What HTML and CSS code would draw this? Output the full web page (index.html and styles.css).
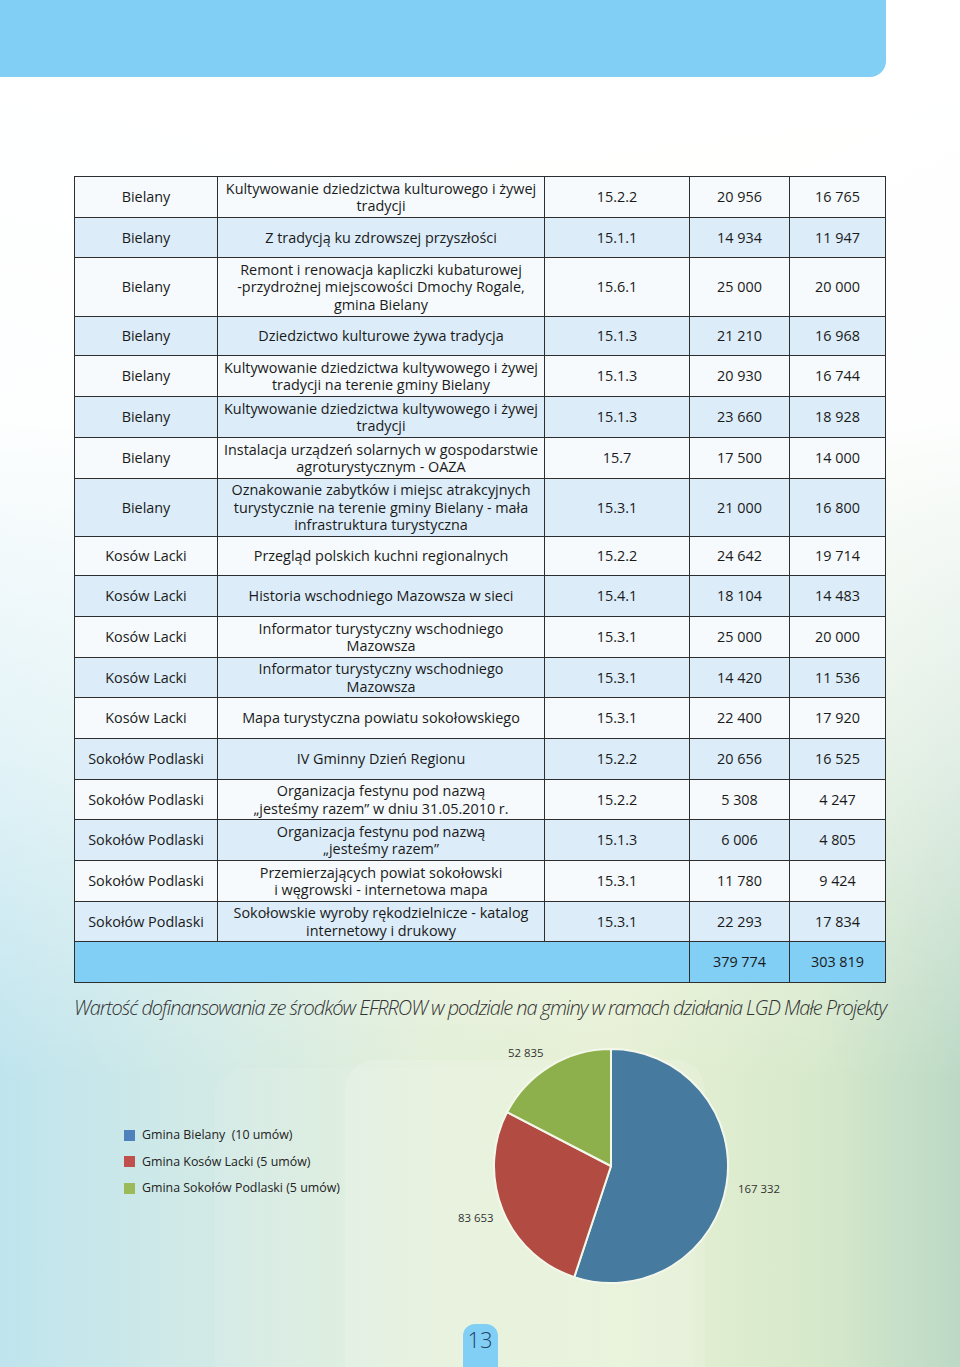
FILE: index.html
```html
<!DOCTYPE html>
<html lang="pl">
<head>
<meta charset="utf-8">
<title>Małe Projekty</title>
<link rel="stylesheet" href="styles.css">
</head>
<body>
<div class="page">
  <div class="deco deco-a"></div>
  <div class="deco deco-b"></div>
  <header class="banner"></header>
  <main class="content">
    <table class="grid">
      <colgroup>
        <col class="c1"><col class="c2"><col class="c3"><col class="c4"><col class="c5">
      </colgroup>
      <tbody>
        <tr class="h41"><td>Bielany</td><td>Kultywowanie dziedzictwa kulturowego i żywej<br>tradycji</td><td>15.2.2</td><td>20 956</td><td>16 765</td></tr>
        <tr class="h40"><td>Bielany</td><td>Z tradycją ku zdrowszej przyszłości</td><td>15.1.1</td><td>14 934</td><td>11 947</td></tr>
        <tr class="h59"><td>Bielany</td><td>Remont i renowacja kapliczki kubaturowej<br>-przydrożnej miejscowości Dmochy Rogale,<br>gmina Bielany</td><td>15.6.1</td><td>25 000</td><td>20 000</td></tr>
        <tr class="h39"><td>Bielany</td><td>Dziedzictwo kulturowe żywa tradycja</td><td>15.1.3</td><td>21 210</td><td>16 968</td></tr>
        <tr class="h41"><td>Bielany</td><td>Kultywowanie dziedzictwa kultywowego i żywej<br>tradycji na terenie gminy Bielany</td><td>15.1.3</td><td>20 930</td><td>16 744</td></tr>
        <tr class="h41"><td>Bielany</td><td>Kultywowanie dziedzictwa kultywowego i żywej<br>tradycji</td><td>15.1.3</td><td>23 660</td><td>18 928</td></tr>
        <tr class="h41"><td>Bielany</td><td>Instalacja urządzeń solarnych w gospodarstwie<br>agroturystycznym - OAZA</td><td>15.7</td><td>17 500</td><td>14 000</td></tr>
        <tr class="h58"><td>Bielany</td><td>Oznakowanie zabytków i miejsc atrakcyjnych<br>turystycznie na terenie gminy Bielany - mała<br>infrastruktura turystyczna</td><td>15.3.1</td><td>21 000</td><td>16 800</td></tr>
        <tr class="h39"><td>Kosów Lacki</td><td>Przegląd polskich kuchni regionalnych</td><td>15.2.2</td><td>24 642</td><td>19 714</td></tr>
        <tr class="h41"><td>Kosów Lacki</td><td>Historia wschodniego Mazowsza w sieci</td><td>15.4.1</td><td>18 104</td><td>14 483</td></tr>
        <tr class="h41"><td>Kosów Lacki</td><td>Informator turystyczny wschodniego<br>Mazowsza</td><td>15.3.1</td><td>25 000</td><td>20 000</td></tr>
        <tr class="h40"><td>Kosów Lacki</td><td>Informator turystyczny wschodniego<br>Mazowsza</td><td>15.3.1</td><td>14 420</td><td>11 536</td></tr>
        <tr class="h41"><td>Kosów Lacki</td><td>Mapa turystyczna powiatu sokołowskiego</td><td>15.3.1</td><td>22 400</td><td>17 920</td></tr>
        <tr class="h41"><td>Sokołów Podlaski</td><td>IV Gminny Dzień Regionu</td><td>15.2.2</td><td>20 656</td><td>16 525</td></tr>
        <tr class="h40"><td>Sokołów Podlaski</td><td>Organizacja festynu pod nazwą<br>„jesteśmy razem” w dniu 31.05.2010 r.</td><td>15.2.2</td><td>5 308</td><td>4 247</td></tr>
        <tr class="h41"><td>Sokołów Podlaski</td><td>Organizacja festynu pod nazwą<br>„jesteśmy razem”</td><td>15.1.3</td><td>6 006</td><td>4 805</td></tr>
        <tr class="h41"><td>Sokołów Podlaski</td><td>Przemierzających powiat sokołowski<br>i węgrowski - internetowa mapa</td><td>15.3.1</td><td>11 780</td><td>9 424</td></tr>
        <tr class="h40"><td>Sokołów Podlaski</td><td>Sokołowskie wyroby rękodzielnicze - katalog<br>internetowy i drukowy</td><td>15.3.1</td><td>22 293</td><td>17 834</td></tr>
        <tr class="h41 total"><td colspan="3"></td><td>379 774</td><td>303 819</td></tr>
      </tbody>
    </table>

    <p class="caption">Wartość dofinansowania ze środków EFRROW w podziale na gminy w ramach działania LGD Małe Projekty</p>

    <section class="chart">
      <ul class="legend">
        <li><span class="sw sw-blue"></span>Gmina Bielany &nbsp;(10 umów)</li>
        <li><span class="sw sw-red"></span>Gmina Kosów Lacki (5 umów)</li>
        <li><span class="sw sw-green"></span>Gmina Sokołów Podlaski (5 umów)</li>
      </ul>
      <svg class="pie" width="360" height="260" viewBox="0 0 360 260" xmlns="http://www.w3.org/2000/svg">
        <path d="M171,125 L171,8 A117,117 0 1,1 134.26,236.08 Z" fill="#467a9e" stroke="#f4f8ea" stroke-width="2" stroke-linejoin="round"/>
        <path d="M171,125 L134.26,236.08 A117,117 0 0,1 67.13,71.16 Z" fill="#b24c42" stroke="#f4f8ea" stroke-width="2" stroke-linejoin="round"/>
        <path d="M171,125 L67.13,71.16 A117,117 0 0,1 171,8 Z" fill="#8db04c" stroke="#f4f8ea" stroke-width="2" stroke-linejoin="round"/>
        <text class="lbl" x="68" y="16">52 835</text>
        <text class="lbl" x="298" y="152">167 332</text>
        <text class="lbl" x="18" y="181">83 653</text>
      </svg>
    </section>
  </main>
  <div class="pagenum">13</div>
</div>
</body>
</html>
```

FILE: styles.css
```css
html, body {
  margin: 0;
  padding: 0;
}

body {
  font-family: "Open Sans", "Liberation Sans", sans-serif;
  color: #1e1e1e;
}

.page {
  position: relative;
  width: 960px;
  height: 1367px;
  overflow: hidden;
  display: flex;
  flex-direction: column;
  background:
    linear-gradient(to bottom, #ffffff 0px, rgba(255,255,255,0.97) 420px, rgba(255,255,255,0.55) 760px, rgba(255,255,255,0) 1080px),
    linear-gradient(to right, #bfe4ee 0%, #d2eae6 22%, #e3efd8 45%, #e6f0d4 65%, #d7e9cb 85%, #bcd9c6 100%);
}

.deco {
  position: absolute;
  border-radius: 30px;
  pointer-events: none;
}

.deco-a {
  left: 345px;
  top: 1060px;
  width: 360px;
  height: 340px;
  background: rgba(255,255,255,0.14);
}

.deco-b {
  left: 215px;
  top: 1068px;
  width: 480px;
  height: 320px;
  background: rgba(255,255,255,0.08);
}

.banner {
  position: relative;
  width: 886px;
  height: 77px;
  flex: none;
  background: #82cff5;
  border-bottom-right-radius: 16px;
}

.content {
  position: relative;
  display: flex;
  flex-direction: column;
  padding-left: 74px;
}

.grid {
  margin-top: 99px;
  width: 811px;
  table-layout: fixed;
  border-collapse: collapse;
  font-size: 14.4px;
  color: #1a1a1a;
}

.c1 { width: 143px; }
.c2 { width: 327px; }
.c3 { width: 145px; }
.c4 { width: 100px; }
.c5 { width: 96px; }

.grid td {
  border: 1.5px solid #2e2e2e;
  text-align: center;
  vertical-align: middle;
  padding: 0;
  line-height: 17.5px;
  white-space: nowrap;
}

.grid tr:nth-child(odd) td { background: #f6fafd; }
.grid tr:nth-child(even) td { background: #dcedf9; }
.grid tr.total td { background: #82cff5; }

.h39 { height: 39px; }
.h40 { height: 40px; }
.h41 { height: 41px; }
.h58 { height: 58px; }
.h59 { height: 59px; }

.caption {
  margin: 12px 0 0 0;
  width: 812px;
  font-size: 20px;
  line-height: 26px;
  font-style: italic;
  font-weight: 300;
  letter-spacing: -1.05px;
  color: #333;
  white-space: nowrap;
}

.chart {
  display: flex;
  margin-top: 20px;
  height: 260px;
}

.legend {
  list-style: none;
  margin: 85px 0 0 50px;
  padding: 0;
  width: 316px;
  display: flex;
  flex-direction: column;
  gap: 8.5px;
  font-size: 12.4px;
  line-height: 18px;
  color: #222;
}

.legend li {
  display: flex;
  align-items: center;
  gap: 7px;
}

.sw {
  width: 11px;
  height: 11px;
  flex: none;
}

.sw-blue { background: #4f81bd; }
.sw-red { background: #c0504d; }
.sw-green { background: #9bbb59; }

.pie {
  flex: none;
}

.lbl {
  font-family: "Open Sans", "Liberation Sans", sans-serif;
  font-size: 11.4px;
  fill: #333;
}

.pagenum {
  position: relative;
  margin: 23px auto 0;
  width: 35px;
  height: 44px;
  flex: none;
  background: #82cff5;
  border-radius: 12px 12px 0 0;
  text-align: center;
  font-size: 22px;
  font-weight: 300;
  line-height: 30px;
  color: #23456a;
}
```
